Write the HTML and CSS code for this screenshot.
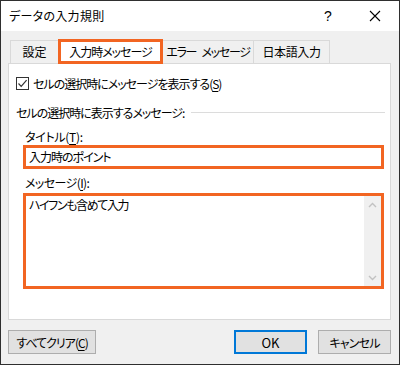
FILE: index.html
```html
<!DOCTYPE html>
<html lang="ja">
<head>
    <meta charset="UTF-8">
    <title>データの入力規則</title>
    <link rel="stylesheet" href="styles.css">
</head>
<body>
    <div class="dialog">
        <div class="titlebar">
            <span class="title">データの入力規則</span>
            <span class="help">?</span>
            <svg class="close" width="12" height="12" viewBox="0 0 12 12">
                <path d="M1 1 L11 11 M11 1 L1 11" stroke="#000" stroke-width="1.1" fill="none"/>
            </svg>
        </div>

        <div class="content">
            <div class="tabs">
                <div class="tab tab-first">設定</div>
                <div class="tab active">入力時メッセージ</div>
                <div class="tab tab-error">エラー メッセージ</div>
                <div class="tab tab-ime">日本語入力</div>
            </div>

            <div class="panel">
                <div class="check-row">
                    <span class="checkbox">
                        <svg width="11" height="11" viewBox="0 0 11 11">
                            <path d="M1.5 5.5 L4.2 8.3 L9.6 2.2" stroke="#333" stroke-width="1.2" fill="none"/>
                        </svg>
                    </span>
                    <span class="check-text">セルの選択時にメッセージを表示する(<u>S</u>)</span>
                </div>

                <div class="group">
                    <span>セルの選択時に表示するメッセージ:</span>
                    <span class="group-line"></span>
                </div>

                <div class="field-label">タイトル(<u>T</u>):</div>
                <div class="input">入力時のポイント</div>

                <div class="field-label field-label-msg">メッセージ(<u>I</u>):</div>
                <div class="textarea">
                    <div class="textarea-text">ハイフンも含めて入力</div>
                    <div class="scrollbar">
                        <svg width="9" height="6" viewBox="0 0 9 6">
                            <path d="M1 5 L4.5 1.5 L8 5" stroke="#c2c2c2" stroke-width="1.4" fill="none"/>
                        </svg>
                        <svg width="9" height="6" viewBox="0 0 9 6">
                            <path d="M1 1 L4.5 4.5 L8 1" stroke="#c2c2c2" stroke-width="1.4" fill="none"/>
                        </svg>
                    </div>
                </div>
            </div>

            <div class="buttons">
                <button class="btn btn-clear">すべてクリア(<u>C</u>)</button>
                <span class="spacer"></span>
                <button class="btn btn-ok">OK</button>
                <button class="btn btn-cancel">キャンセル</button>
            </div>
        </div>
    </div>
</body>
</html>
```

FILE: styles.css
```css
* {
    box-sizing: border-box;
    margin: 0;
    padding: 0;
}

body {
    font-family: "Noto Sans CJK JP", "Noto Sans", sans-serif;
    font-feature-settings: "palt";
    font-size: 12px;
    letter-spacing: -1px;
    color: #000;
    background: #fff;
    white-space: nowrap;
}

u {
    text-decoration: underline;
    text-underline-offset: 2px;
}

.dialog {
    width: 400px;
    height: 365px;
    border: 1px solid #2f2f2f;
    background: #f0f0f0;
    display: flex;
    flex-direction: column;
}

.titlebar {
    height: 30px;
    background: #fff;
    display: flex;
    align-items: center;
    padding-left: 8px;
}

.title {
    flex: 1;
    line-height: 16px;
    letter-spacing: 0.3px;
}

.help {
    width: 12px;
    margin-right: 33px;
    font-family: "Liberation Sans", sans-serif;
    font-size: 14px;
    letter-spacing: 0;
}

.close {
    margin-right: 18px;
}

.content {
    padding: 8px 0 0 7px;
}

.tabs {
    display: flex;
    align-items: flex-end;
    height: 25px;
    margin-bottom: -1px;
    position: relative;
    z-index: 1;
}

.tab {
    height: 23px;
    line-height: 21px;
    border: 1px solid #d9d9d9;
    border-bottom: none;
    background: #f0f0f0;
    text-align: center;
    margin-bottom: 1px;
}

.tab-first {
    width: 48px;
    margin-left: 2px;
    border-right: none;
    letter-spacing: 0;
}

.tab-error {
    width: 91px;
    border-left: none;
    letter-spacing: -1.3px;
    word-spacing: 4px;
}

.tab-ime {
    width: 76px;
    border-left: none;
    letter-spacing: -0.4px;
}

.tab.active {
    width: 105px;
    height: 25px;
    line-height: 19px;
    background: #fff;
    border: 3px solid #f26522;
    margin-bottom: 0;
}

.panel {
    width: 383px;
    height: 257px;
    background: #fff;
    border: 1px solid #d9d9d9;
    padding: 0 5px 0 7px;
}

.check-row {
    display: flex;
    align-items: center;
    gap: 4px;
    height: 13px;
    margin-top: 13px;
}

.check-text {
    line-height: 16px;
}

.checkbox {
    width: 13px;
    height: 13px;
    border: 1px solid #333;
    display: flex;
    align-items: center;
    justify-content: center;
}

.group {
    display: flex;
    align-items: center;
    gap: 7px;
    height: 16px;
    margin-top: 14px;
}

.group-line {
    flex: 1;
    height: 1px;
    background: #dcdcdc;
}

.field-label {
    height: 16px;
    line-height: 16px;
    margin-top: 9px;
    padding-left: 9px;
    letter-spacing: -0.3px;
}

.field-label-msg {
    margin-top: 6px;
    letter-spacing: -0.6px;
}

.input {
    height: 24px;
    margin-left: 7px;
    width: 361px;
    border: 3px solid #f26522;
    padding-left: 3px;
    line-height: 17px;
}

.textarea {
    height: 96px;
    margin-top: 2px;
    margin-left: 7px;
    width: 361px;
    border: 3px solid #f26522;
    display: flex;
}

.textarea-text {
    flex: 1;
    padding: 1px 3px;
    line-height: 16px;
    letter-spacing: -1.4px;
}

.scrollbar {
    width: 17px;
    background: #f0f0f0;
    display: flex;
    flex-direction: column;
    justify-content: space-between;
    align-items: center;
    padding: 6px 0 5px;
}

.buttons {
    display: flex;
    margin-top: 10px;
    height: 24px;
}

.btn {
    font-family: inherit;
    font-size: 12px;
    font-feature-settings: "palt";
    letter-spacing: -1px;
    height: 24px;
    background: #e1e1e1;
    border: 1px solid #adadad;
    color: #000;
}

.btn-clear {
    width: 88px;
}

.spacer {
    flex: 1;
}

.btn-ok {
    width: 73px;
    border: 2px solid #0078d7;
    font-size: 13px;
    letter-spacing: 0;
}

.btn-cancel {
    width: 73px;
    margin-left: 11px;
    margin-right: 8px;
    letter-spacing: -0.8px;
}
```
